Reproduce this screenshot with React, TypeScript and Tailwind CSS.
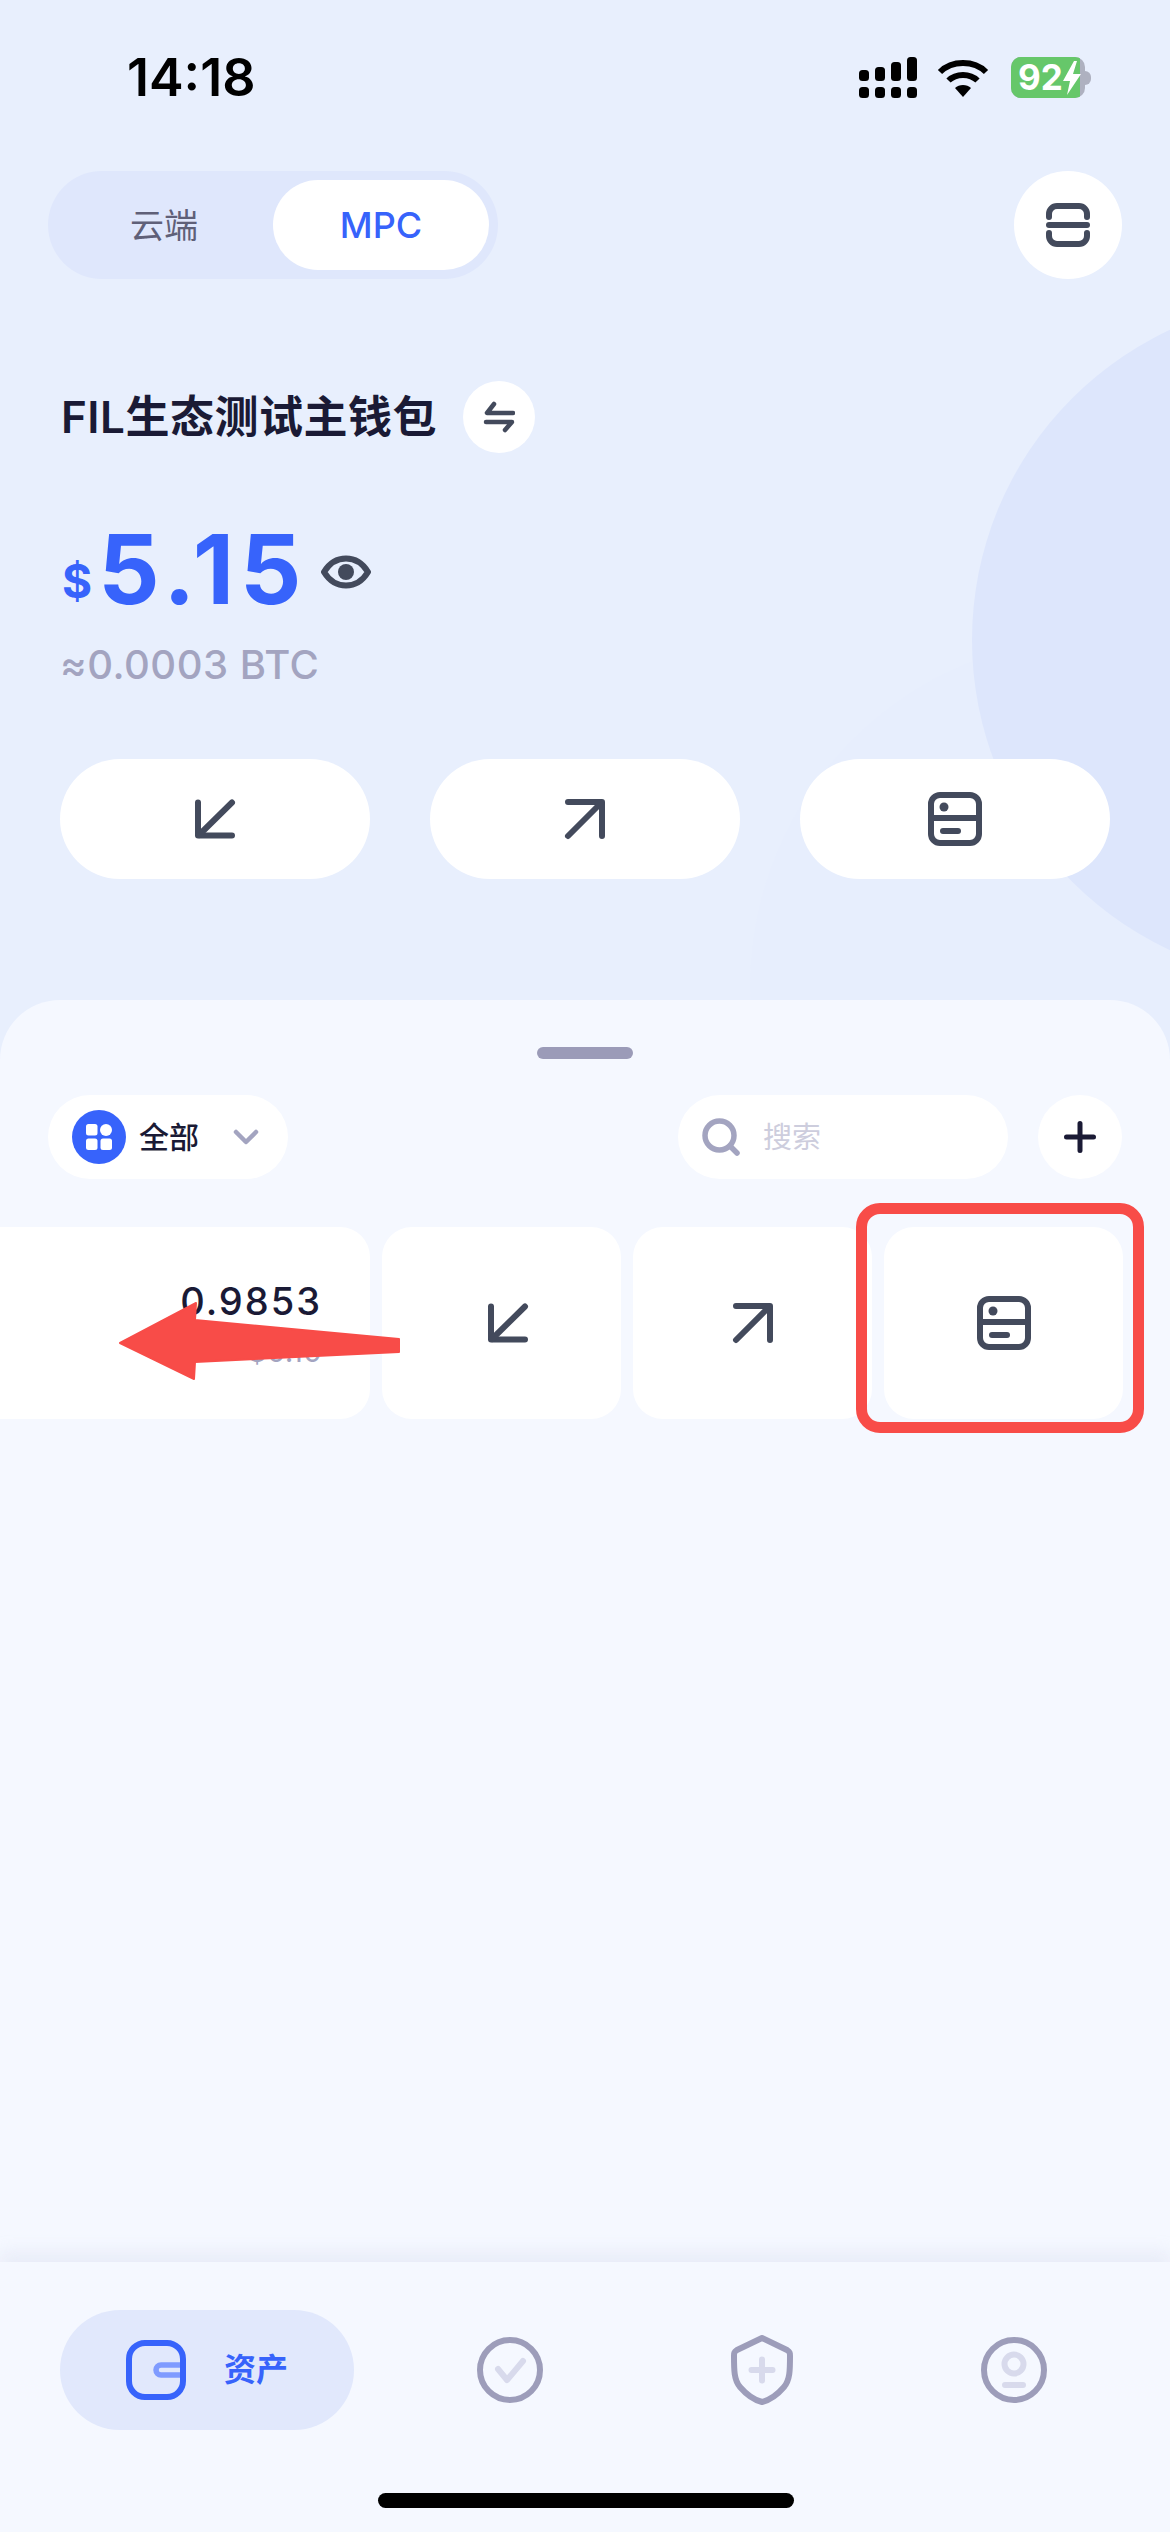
const INK = "#434a5c";

function Receive() {
  return (
    <svg width="48" height="48" viewBox="0 0 48 48" fill="none" stroke={INK} strokeWidth="6" strokeLinecap="round" strokeLinejoin="round">
      <path d="M7 7.500V40.500H41" />
      <path d="M41 7.500 8 40" />
    </svg>
  );
}

function Send() {
  return (
    <svg width="48" height="48" viewBox="0 0 48 48" fill="none" stroke={INK} strokeWidth="6" strokeLinecap="round" strokeLinejoin="round">
      <path d="M7 7H41V41" />
      <path d="M40 8 7 41" />
    </svg>
  );
}

function Ledger() {
  return (
    <svg width="54" height="54" viewBox="0 0 54 54" fill="none" stroke={INK} strokeWidth="6" strokeLinecap="round">
      <rect x="3" y="3" width="48" height="48" rx="9" />
      <path d="M3 26h48" />
      <circle cx="16" cy="15" r="4.500" fill={INK} stroke="none" />
      <path d="M15 39h15" />
    </svg>
  );
}

function SignalBars() {
  return (
    <svg width="58" height="41" viewBox="0 0 58 41" fill="#000">
      <rect x="0" y="13" width="10" height="11" rx="3.500" />
      <rect x="16" y="10" width="10" height="14" rx="3.500" />
      <rect x="32" y="5" width="10" height="19" rx="3.500" />
      <rect x="48" y="0" width="10" height="24" rx="3.500" />
      <rect x="0" y="30" width="10" height="11" rx="3.500" />
      <rect x="16" y="30" width="10" height="11" rx="3.500" />
      <rect x="32" y="30" width="10" height="11" rx="3.500" />
      <rect x="48" y="30" width="10" height="11" rx="3.500" />
    </svg>
  );
}

function Wifi() {
  return (
    <svg width="52" height="38" viewBox="0 0 52 38" fill="none" stroke="#000" strokeWidth="6">
      <path d="M3 13C15 1 37 1 49 13" />
      <path d="M11.500 21.500C19 14 33 14 40.500 21.500" />
      <path d="M18 29l8 9 8-9c-4-4-12-4-16 0Z" fill="#000" stroke="none" />
    </svg>
  );
}

function Battery() {
  return (
    <div className="flex items-center">
      <div className="flex h-[41px] w-[74px] overflow-hidden rounded-[10px] bg-[#aeb1c0]">
        <div className="flex w-[69px] items-center bg-[#66c76a] pl-[7px]">
          <span className="text-[35px] leading-none font-bold text-white">92</span>
          <svg width="18" height="34" viewBox="0 0 18 34" fill="#fff" className="shrink-0">
            <path d="M11 0 0 20h7L4 34l14-21h-8l4-13Z" />
          </svg>
        </div>
      </div>
      <div className="h-[14px] w-[6px] rounded-r-full bg-[#aeb1c0]" />
    </div>
  );
}

function ActionButton({ children }: { children: React.ReactNode }) {
  return (
    <button className="flex h-[120px] w-[310px] items-center justify-center rounded-[60px] bg-white">
      {children}
    </button>
  );
}

function ActionCard({ children }: { children: React.ReactNode }) {
  return (
    <div className="flex h-[192px] w-[239px] shrink-0 items-center justify-center rounded-[30px] bg-white">
      {children}
    </div>
  );
}

export default function App() {
  return (
    <div className="relative flex h-[2532px] w-[1170px] flex-col overflow-hidden bg-[#e8effd] font-['Inter','Noto_Sans_CJK_SC',sans-serif]">
      {/* background circles */}
      <div className="absolute left-[750px] top-[637px] h-[700px] w-[700px] rounded-full bg-[#e7eefd]" />
      <div className="absolute left-[972px] top-[298px] h-[684px] w-[684px] rounded-full bg-[#dde6fc]" />

      {/* Status bar */}
      <div className="relative flex h-[171px] shrink-0 items-start pl-[127px] pr-[79px] pt-[57px]">
        <span className="text-[52px] leading-[41px] font-semibold text-black">14:18</span>
        <div className="ml-auto flex items-start gap-[22px]">
          <SignalBars />
          <div className="mt-[2px] -ml-[2px]">
            <Wifi />
          </div>
          <Battery />
        </div>
      </div>

      {/* Switcher */}
      <div className="relative flex h-[108px] shrink-0 items-center justify-between px-[48px]">
        <div className="flex h-[108px] w-[450px] items-center rounded-[54px] bg-[#dfe7fc] p-[9px]">
          <span className="flex-1 pr-[2px] text-center text-[34px] text-[#5f6078]">云端</span>
          <span className="flex h-[90px] w-[216px] items-center justify-center rounded-[45px] bg-white text-[36px] font-medium text-[#3763fb]">
            MPC
          </span>
        </div>
        <div className="flex h-[108px] w-[108px] items-center justify-center rounded-full bg-white">
          <svg width="44" height="44" viewBox="0 0 44 44" fill="none" stroke={INK} strokeWidth="6" strokeLinecap="round">
            <path d="M3 14V11a8 8 0 0 1 8-8h22a8 8 0 0 1 8 8v3" />
            <path d="M3 22h38" />
            <path d="M3 30v3a8 8 0 0 0 8 8h22a8 8 0 0 0 8-8v-3" />
          </svg>
        </div>
      </div>

      {/* Wallet name */}
      <div className="relative mt-[102px] flex h-[72px] shrink-0 items-center pl-[61px]">
        <span className="text-[44px] leading-none font-semibold tracking-[0.5px] text-[#1a1a35]">FIL生态测试主钱包</span>
        <div className="ml-[26px] flex h-[72px] w-[72px] items-center justify-center rounded-full bg-white">
          <svg width="32" height="32" viewBox="0 0 32 32" fill="none" stroke={INK} strokeWidth="4.500" strokeLinecap="round" strokeLinejoin="round">
            <path d="M11 3 4 12h26" />
            <path d="M3 21h26l-7 8" />
          </svg>
        </div>
      </div>

      {/* Balance */}
      <div className="relative mt-[68px] flex h-[96px] shrink-0 items-center pl-[62px] text-[#3763fb]">
        <span className="mt-[24px] text-[46px] leading-none font-bold">$</span>
        <span className="ml-[6px] text-[96px] leading-none font-bold tracking-[6px]">5.15</span>
        <svg width="50" height="38" viewBox="0 0 50 38" fill="none" stroke={INK} strokeWidth="6" className="ml-[14px] mt-[6px]">
          <path d="M3 19C14 1 36 1 47 19 36 37 14 37 3 19Z" strokeLinejoin="round" />
          <circle cx="25" cy="19" r="8" fill={INK} stroke="none" />
        </svg>
      </div>
      <div className="relative mt-[24px] shrink-0 pl-[60px] text-[40px] leading-[48px] font-medium tracking-[0.5px] text-[#a3a4c0]">≈0.0003 BTC</div>

      {/* Receive / send / records */}
      <div className="relative mt-[70px] flex shrink-0 justify-between pl-[60px] pr-[60px]">
        <ActionButton>
          <Receive />
        </ActionButton>
        <ActionButton>
          <Send />
        </ActionButton>
        <ActionButton>
          <Ledger />
        </ActionButton>
      </div>

      {/* Sheet */}
      <div className="relative mt-[121px] flex min-h-0 flex-1 flex-col rounded-t-[60px] bg-[#f5f8ff]">
        <div className="mx-auto mt-[47px] h-[12px] w-[96px] shrink-0 rounded-[6px] bg-[#9b9bb8]" />

        <div className="mt-[36px] flex h-[84px] shrink-0 items-center px-[48px]">
          <div className="flex h-[84px] w-[240px] items-center rounded-[42px] bg-white pl-[24px]">
            <div className="flex h-[54px] w-[54px] items-center justify-center rounded-full bg-[#3763fb]">
              <svg width="26" height="26" viewBox="0 0 26 26" fill="#fff">
                <rect x="0" y="0" width="11.500" height="11.500" rx="2.500" />
                <circle cx="20" cy="6" r="6" />
                <rect x="0" y="14.500" width="11.500" height="11.500" rx="2.500" />
                <rect x="14.500" y="14.500" width="11.500" height="11.500" rx="2.500" />
              </svg>
            </div>
            <span className="ml-[13px] text-[30px] leading-none font-medium text-[#1a1a35]">全部</span>
            <svg width="26" height="16" viewBox="0 0 26 16" fill="none" stroke="#a3a4c0" strokeWidth="4.500" strokeLinecap="round" strokeLinejoin="round" className="ml-[34px]">
              <path d="M3 3l10 10L23 3" />
            </svg>
          </div>

          <div className="ml-auto flex h-[84px] w-[330px] items-center rounded-[42px] bg-white pl-[24px]">
            <svg width="38" height="38" viewBox="0 0 38 38" fill="none" stroke="#a3a4c0" strokeWidth="5.500" strokeLinecap="round">
              <circle cx="17.500" cy="17.500" r="14.500" />
              <path d="M28 28l7 7" />
            </svg>
            <span className="ml-[23px] text-[29px] leading-none text-[#cdcddd]">搜索</span>
          </div>

          <div className="ml-[30px] flex h-[84px] w-[84px] items-center justify-center rounded-full bg-white">
            <svg width="32" height="32" viewBox="0 0 32 32" fill="none" stroke="#1a1a35" strokeWidth="5" strokeLinecap="round">
              <path d="M16 2.500v27M2.500 16h27" />
            </svg>
          </div>
        </div>

        {/* Swiped asset row */}
        <div className="mt-[48px] flex h-[192px] shrink-0 gap-[12px]">
          <div className="flex h-[192px] w-[370px] shrink-0 flex-col items-end rounded-r-[30px] bg-white pr-[48px] pt-[52px]">
            <span className="text-[38px] leading-[44px] font-medium tracking-[2px] text-[#1a1a35]">0.9853</span>
            <span className="mt-[9px] text-[30px] leading-[38px] text-[#a3a4c0]">$0.10</span>
          </div>
          <ActionCard>
            <div className="ml-[12px]">
              <Receive />
            </div>
          </ActionCard>
          <ActionCard>
            <Send />
          </ActionCard>
          <ActionCard>
            <Ledger />
          </ActionCard>
        </div>

        {/* Tab bar */}
        <div className="mt-auto flex h-[270px] shrink-0 items-start bg-[#f5f8ff] pl-[60px] pt-[48px] shadow-[0_-10px_16px_rgba(190,198,225,0.22)]">
          <div className="flex h-[120px] w-[294px] items-center rounded-[60px] bg-[#e1e8fc] pl-[66px]">
            <svg width="60" height="60" viewBox="0 0 60 60" fill="none">
              <path d="M54 25H35a5 5 0 0 0 0 10h19" stroke="#7f9bff" strokeWidth="5.500" />
              <rect x="3" y="3" width="54" height="54" rx="16" stroke="#3763fb" strokeWidth="6" />
            </svg>
            <span className="ml-[38px] text-[32px] leading-none font-semibold text-[#3763fb]">资产</span>
          </div>

          <div className="ml-[30px] flex h-[120px] w-[252px] items-center justify-center">
            <svg width="66" height="66" viewBox="0 0 66 66" fill="none" strokeLinecap="round" strokeLinejoin="round">
              <circle cx="33" cy="33" r="30" stroke="#9d9dba" strokeWidth="6" />
              <path d="M21 32l9 11 16-19" stroke="#d8daec" strokeWidth="6" />
            </svg>
          </div>
          <div className="flex h-[120px] w-[252px] items-center justify-center">
            <svg width="62" height="70" viewBox="0 0 62 70" fill="none" strokeLinecap="round" strokeLinejoin="round">
              <path d="M31 3 56 15c3 2 3 3 3 6 0 14 0 24-6 31-6 7-14 13-22 15-8-2-16-8-22-15C3 45 3 35 3 21c0-3 0-4 3-6L31 3Z" stroke="#9d9dba" strokeWidth="6" />
              <path d="M31 24.500v21M20.500 35h21" stroke="#d8daec" strokeWidth="6" />
            </svg>
          </div>
          <div className="flex h-[120px] w-[252px] items-center justify-center">
            <svg width="66" height="66" viewBox="0 0 66 66" fill="none" strokeLinecap="round">
              <circle cx="33" cy="33" r="30" stroke="#9d9dba" strokeWidth="6" />
              <circle cx="33" cy="27" r="9.500" stroke="#d8daec" strokeWidth="6" />
              <path d="M24 48h18" stroke="#d8daec" strokeWidth="6" />
            </svg>
          </div>
        </div>
      </div>

      {/* Home indicator */}
      <div className="absolute left-[378px] top-[2493px] h-[15px] w-[416px] rounded-full bg-black" />

      {/* Annotations drawn over the screenshot */}
      <div className="absolute left-[856px] top-[1203px] h-[230px] w-[288px] rounded-[24px] border-[11px] border-[#f84c48]" />
      <svg className="absolute left-[110px] top-[1293px]" width="300" height="96" viewBox="0 0 300 96" fill="#f84c48">
        <path d="M10 50 86 10 85 27 289 46V59L85 69 84 86Z" strokeLinejoin="round" stroke="#f84c48" strokeWidth="2" />
      </svg>
    </div>
  );
}
